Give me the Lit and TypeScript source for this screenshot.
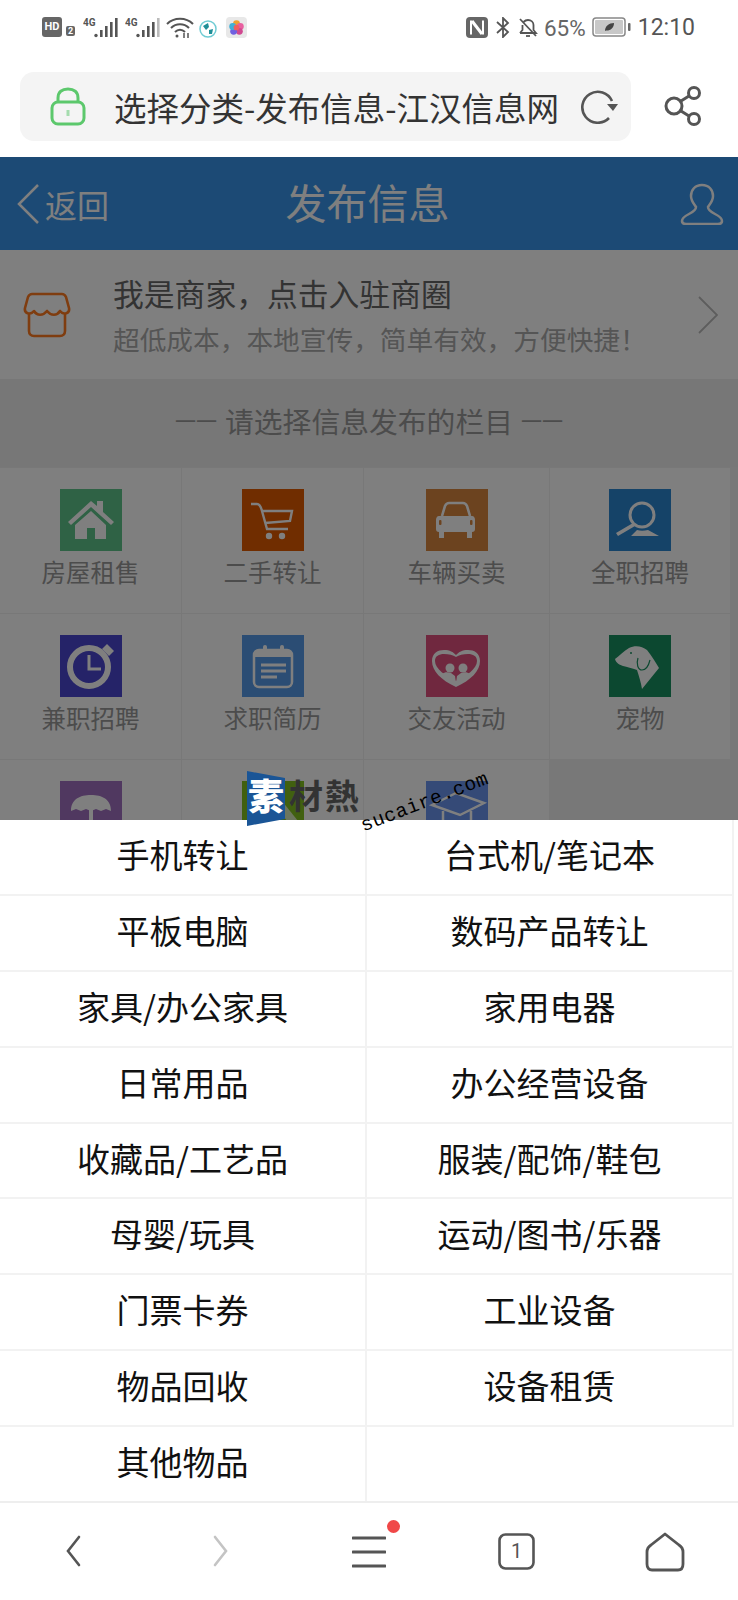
import { LitElement, html, css, svg } from 'lit';
import { customElement } from 'lit/decorators.js';

const tiles = [
  { label: '房屋租售', bg: '#5fc48a', icon: svg`<path d="M8 33 31 12 37 17V12H43V23L54 33 51 36 31 18 11 36Z"/><path d="M15 36 31 22 46 36V50H35V39H27V50H15Z"/>` },
  { label: '二手转让', bg: '#e05a00', icon: svg`<g fill="none" stroke="#fff" stroke-width="2.4"><path d="M9 15H15C18 15 19 18 20 22L25 40H46"/><path d="M20 22H50L48 32 23 34"/></g><circle cx="27" cy="47" r="3.2"/><circle cx="40" cy="47" r="3.2"/>` },
  { label: '车辆买卖', bg: '#d9873f', icon: svg`<path fill="none" stroke="#fff" stroke-width="2.6" d="M16 27 19 17C20 15 21 14 23 14H37C39 14 40 15 41 17L44 27"/><path d="M13 27H46C48 27 49 29 49 31V40C49 42 48 43 46 43V49H41V43H18V49H13V43C11 43 10 42 10 40V31C10 29 11 27 13 27Z"/><rect x="13" y="31" width="2.5" height="5" rx="1" fill="#d9873f"/><rect x="44" y="31" width="2.5" height="5" rx="1" fill="#d9873f"/>` },
  { label: '全职招聘', bg: '#2a86d0', icon: svg`<circle cx="33" cy="26" r="12" fill="none" stroke="#fff" stroke-width="3"/><path d="M24 34 7 44 9 47 26 37Z"/><path d="M28 41C31 42 35 42 39 41L50 47H22Z"/>` },
  { label: '兼职招聘', bg: '#4a47d0', icon: svg`<circle cx="29" cy="32" r="19" fill="none" stroke="#fff" stroke-width="6"/><path d="M42 14 47 9 54 16 49 21Z"/><path d="M29 20V34H41" fill="none" stroke="#fff" stroke-width="3"/>` },
  { label: '求职简历', bg: '#569be8', icon: svg`<rect x="12" y="15" width="38" height="37" rx="5" fill="none" stroke="#fff" stroke-width="2.5"/><path d="M12 20C12 16 14 15 17 15H45C48 15 50 16 50 20V22H12Z"/><rect x="21" y="10" width="4" height="9" rx="2"/><rect x="38" y="10" width="4" height="9" rx="2"/><path d="M19 30H44M19 36H44M19 42H35" stroke="#fff" stroke-width="3"/>` },
  { label: '交友活动', bg: '#e0507f', icon: svg`<path fill-rule="evenodd" d="M30 52C15 45 6 36 6 26 6 18 12 15 18 15 24 15 27 17 30 20 33 17 36 15 42 15 48 15 54 18 54 26 54 36 45 45 30 52ZM30 46C40 41 51 34 51 26 51 21 47 19 42 19 37 19 33 20 30 22 27 20 23 19 18 19 13 19 9 21 9 26 9 34 20 41 30 46Z"/><circle cx="24" cy="33" r="4.5"/><circle cx="37" cy="33" r="4.5"/><path d="M16 39C19 37 21 37 25 38L29 41 30 48ZM44 39C41 37 39 37 35 38L31 41 30 48Z"/>` },
  { label: '宠物', bg: '#189060', icon: svg`<path d="M6 24C10 21 15 16 20 13 26 10 33 11 38 15 43 21 47 28 50 33L33 54C32 48 30 41 28 35 23 33 18 32 14 31 11 30 7 28 6 24Z"/><circle cx="22" cy="18" r="1" fill="#189060"/><path d="M29 23C27 29 29 35 33 35 38 35 40 29 41 25" fill="none" stroke="#189060" stroke-width="1.2"/>` },
  { label: '', bg: '#a070c0', icon: svg`<path d="M11 30C11 18 20 14 31 14 42 14 51 18 51 30L46 28 41 30 36 28 31 30 26 28 21 30 16 28Z"/><rect x="29" y="28" width="4" height="22"/>` },
  { label: '', bg: '#83c020', icon: svg`<path d="M10 4H24V40H10Z" opacity=".6"/><path d="M40 20 56 40 48 44 36 28Z" opacity=".7"/>` },
  { label: '', bg: '#6a94ee', icon: svg`<path d="M6 24 30 12 58 22 34 34Z" fill="none" stroke="#fff" stroke-width="2.5"/><path d="M17 30V42C26 48 38 48 45 40V30" fill="none" stroke="#fff" stroke-width="2.5"/>` },
];

const sheetItems = [
  '手机转让', '台式机/笔记本', '平板电脑', '数码产品转让', '家具/办公家具', '家用电器',
  '日常用品', '办公经营设备', '收藏品/工艺品', '服装/配饰/鞋包', '母婴/玩具', '运动/图书/乐器',
  '门票卡券', '工业设备', '物品回收', '设备租赁', '其他物品',
];

@customElement('app-root')
class AppRoot extends LitElement {
  static styles = css`
    :host {
      display: block;
      width: 738px;
      height: 1600px;
      background: #fff;
      overflow: hidden;
      font-family: "Noto Sans CJK SC", "Noto Sans", sans-serif;
    }
    svg { display: block; flex: none; }

    .status {
      height: 56px;
      display: flex;
      justify-content: space-between;
      padding: 0 43px 0 42px;
      box-sizing: border-box;
      color: #555;
      font-family: Roboto, sans-serif;
    }
    .status-group { display: flex; align-items: flex-start; padding-top: 17px; }
    .hd {
      width: 20px; height: 20px; border-radius: 3px; background: #666; color: #fff;
      font: 700 11px/20px Roboto, sans-serif; text-align: center;
    }
    .sim {
      width: 9px; height: 10px; margin: 9px 0 0 4px; border-radius: 2px; background: #666; color: #fff;
      font: 700 9px/10px Roboto, sans-serif; text-align: center;
    }
    .percent { font-size: 22.5px; line-height: 22px; margin: 0 6px 0 6px; color: #666; }
    .clock { font-size: 23px; line-height: 22px; margin-left: 7px; color: #555; }

    .toolbar { height: 101px; display: flex; align-items: flex-start; padding: 16px 0 0 20px; box-sizing: border-box; }
    .address {
      width: 611px; height: 69px; border-radius: 14px; background: #f4f4f4;
      display: flex; align-items: center; box-sizing: border-box; padding-left: 30px;
    }
    .address-title { font-size: 32.5px; color: #333; margin-left: 28px; width: 450px; white-space: nowrap; }
    .reload { margin-left: 16px; }
    .share { margin: 14px 0 0 33px; }

    .web { position: relative; height: 1344px; background: #fff; overflow: hidden; }
    .header {
      height: 93px; background: #3894ea; color: #fff; display: flex; align-items: center;
      position: relative; box-sizing: border-box; padding: 0 16px;
    }
    .back { display: flex; align-items: center; font-size: 32px; gap: 5px; }
    .page-title { position: absolute; left: 0; right: 3px; text-align: center; font-size: 41px; padding-bottom: 5px; }
    .user { margin-left: auto; margin-right: -2px; }

    .banner { height: 129px; display: flex; align-items: center; padding-left: 23px; box-sizing: border-box; }
    .banner-text { margin-left: 42px; flex: 1; }
    .banner-title { font-size: 30.8px; line-height: 40px; color: #666; }
    .banner-sub { font-size: 26.7px; line-height: 36px; color: #aaa; margin-top: 8px; }
    .chevron { margin-right: 20px; }

    .section {
      height: 88px; background: #eee; display: flex; align-items: center; justify-content: center;
      font-size: 28.8px; color: #999; gap: 8px; padding-bottom: 6px; box-sizing: border-box;
    }
    .dash { font-size: 21px; }
    .grid {
      display: grid; grid-template-columns: 181px 181px 185px 180px; grid-auto-rows: 145px;
      gap: 1px; background: #f0f0f0; padding: 1px 8px 0 0;
    }
    .cell { background: #fff; display: flex; flex-direction: column; align-items: center; padding-top: 21px; box-sizing: border-box; }
    .tile { width: 62px; height: 62px; }
    .tile svg { fill: #fff; }
    .cell-label { font-size: 24.5px; line-height: 34px; color: #999; margin-top: 4px; }
    .cell.empty { background: #f0f0f0; }

    .scrim { position: absolute; inset: 0; background: rgba(0, 0, 0, 0.5); }
    .sheet {
      position: absolute; left: 0; right: 0; bottom: 0; height: 681px; background: #fff;
      display: grid; grid-template-columns: 367px 367px; grid-template-rows: repeat(8, 75.9px) 1fr;
    }
    .item {
      display: flex; align-items: center; justify-content: center; font-size: 33px; color: #111;
      border-right: 2px solid #f2f2f2; border-bottom: 2px solid #f2f2f2; box-sizing: border-box;
      padding-bottom: 6px;
    }
    .item.last { border-bottom: none; }

    .mark { position: absolute; left: 247px; top: 614px; width: 260px; height: 60px; }
    .mark-flag { position: absolute; left: 0; top: 0; }
    .mark-su { position: absolute; left: 0; top: 1px; width: 38px; text-align: center; color: #fff; font-size: 36px; line-height: 44px; font-weight: 900; }
    .mark-rest { position: absolute; left: 42px; top: 2px; color: #333; font-size: 34px; line-height: 44px; font-weight: 700; white-space: nowrap; letter-spacing: 2px; }
    .mark-url {
      position: absolute; left: 119px; top: 43px; font: 19.5px/24px "Liberation Mono", monospace; color: #000;
      transform: rotate(-21deg); transform-origin: left bottom; white-space: nowrap; letter-spacing: 0.6px;
    }

    .nav { height: 99px; border-top: 2px solid #eee; box-sizing: border-box; position: relative; display: flex; }
    .nav-slot { position: relative; }
    .dot { position: absolute; width: 13px; height: 13px; border-radius: 50%; background: #f04848; left: 35px; top: -3px; }
    .tab-count { position: absolute; inset: 0; text-align: center; font: 20px/36px Roboto, sans-serif; color: #555; }
    .nav-back { margin: 32px 0 0 66px; }
    .nav-forward { margin: 32px 0 0 132px; }
    .nav-menu { margin: 20px 0 0 124px; }
    .nav-tab { margin: 30px 0 0 112px; width: 37px; height: 37px; }
    .nav-home { margin: 29px 0 0 110px; }
  `;

  private renderStatus() {
    const signal = (last: string) => svg`<svg width="36" height="22" viewBox="0 0 36 22">
      <text x="0" y="9" font-family="Roboto, sans-serif" font-size="10" font-weight="700" fill="#555">4G</text>
      <circle cx="13" cy="18.5" r="1.7" fill="#555"/>
      <rect x="17" y="13" width="2.6" height="7" fill="#555"/>
      <rect x="22" y="9" width="2.6" height="11" fill="#555"/>
      <rect x="27" y="5" width="2.6" height="15" fill="#555"/>
      <rect x="32" y="1" width="2.6" height="19" fill="${last}"/>
    </svg>`;
    return html`<div class="status">
      <div class="status-group">
        <div class="hd">HD</div>
        <div class="sim">2</div>
        <div style="width:8px"></div>
        ${signal('#555')}
        <div style="width:6px"></div>
        ${signal('#bbb')}
        <div style="width:5px"></div>
        <svg width="28" height="22" viewBox="0 0 28 22" fill="none" stroke="#555" stroke-width="2">
          <path d="M1 7C8 0 20 0 27 7"/><path d="M5 11C10 6 18 6 23 11"/><path d="M9 15C12 12 16 12 19 15"/>
          <circle cx="11" cy="19" r="1.5" fill="#555" stroke="none"/>
          <path d="M18 16V21M22 16V21" stroke-width="1.5"/>
        </svg>
        <div style="width:5px"></div>
        <svg width="18" height="20" viewBox="0 0 18 20" style="margin-top:2px">
          <circle cx="9" cy="10" r="8" fill="#fff" stroke="#70ccd4" stroke-width="1.5"/>
          <path d="M4 7 9 4 10 8 7 11ZM10 11 14 10 13 15 10 15Z" fill="#1f8f98"/>
        </svg>
        <div style="width:9px"></div>
        <svg width="21" height="21" viewBox="0 0 22 22">
          <rect width="22" height="22" rx="4" fill="#e8e8e8"/>
          <circle cx="11" cy="7" r="3.6" fill="#f0a030"/><circle cx="15" cy="10" r="3.6" fill="#e860a0"/>
          <circle cx="14" cy="15" r="3.6" fill="#d04890"/><circle cx="8" cy="15" r="3.6" fill="#7060e0"/>
          <circle cx="7" cy="10" r="3.6" fill="#40b0d8"/><circle cx="11" cy="11" r="3" fill="#f06060"/>
        </svg>
      </div>
      <div class="status-group">
        <svg width="22" height="21" viewBox="0 0 22 21">
          <rect width="22" height="21" rx="4" fill="#666"/>
          <path d="M5 3.5V17.5M17 3.5V17.5" stroke="#fff" stroke-width="2"/>
          <path d="M6 4 16 17" stroke="#fff" stroke-width="3"/>
        </svg>
        <div style="width:8px"></div>
        <svg width="14" height="21" viewBox="0 0 14 21" fill="none" stroke="#555" stroke-width="1.8">
          <path d="M1 5 12 15 7 20V1L12 6 1 16"/>
        </svg>
        <div style="width:8px"></div>
        <svg width="20" height="21" viewBox="0 0 20 21" fill="none" stroke="#555" stroke-width="1.8">
          <path d="M2 16H18L15.5 13V8C15.5 5 13 3 10 3 8 3 6.5 4 5.5 5M4.5 8V13L2 16"/>
          <path d="M2 2 18 19"/><path d="M8 19H12" />
        </svg>
        <div class="percent">65%</div>
        <svg width="39" height="21" viewBox="0 0 39 21">
          <rect x="1" y="1" width="32" height="18" rx="3" fill="#fff" stroke="#888" stroke-width="1.5"/>
          <rect x="3" y="3" width="28" height="14" rx="1" fill="#c8c8c8"/>
          <path d="M13 14C13 9 17 6 22 6 22 11 18 14 14 13.5Z" fill="#444"/>
          <rect x="36" y="6" width="2.5" height="8" rx="1" fill="#666"/>
        </svg>
        <div class="clock">12:10</div>
      </div>
    </div>`;
  }

  private renderToolbar() {
    return html`<div class="toolbar">
      <div class="address">
        <svg width="36" height="40" viewBox="0 0 36 40" fill="none" stroke="#5cc86c" stroke-width="3">
          <path d="M8 15V11C8 5 12 2 18 2 24 2 28 5 28 11V15"/>
          <rect x="2" y="15" width="32" height="22" rx="6"/>
          <path d="M18 23V29" stroke="#a5dcae" stroke-width="3"/>
        </svg>
        <div class="address-title">选择分类-发布信息-江汉信息网</div>
        <svg class="reload" width="38" height="34" viewBox="0 0 38 34" fill="none" stroke="#555" stroke-width="2.6">
          <path d="M29 28A15.5 15.5 0 1 1 32 11"/>
          <path d="M27 14H38L33 21Z" fill="#555" stroke="none"/>
        </svg>
      </div>
      <svg class="share" width="38" height="40" viewBox="0 0 38 40" fill="none" stroke="#555" stroke-width="3">
        <circle cx="10" cy="20" r="8"/><circle cx="30" cy="7" r="5.5"/><circle cx="30" cy="33" r="5.5"/>
        <path d="M17 15 25 10M17 25 25 30"/>
      </svg>
    </div>`;
  }

  private renderWeb() {
    return html`<div class="web">
      <div class="header">
        <div class="back">
          <svg width="24" height="42" viewBox="0 0 24 42" fill="none" stroke="#fff" stroke-width="2.5"><path d="M22 2 3 21 22 40"/></svg>
          <span>返回</span>
        </div>
        <div class="page-title">发布信息</div>
        <svg class="user" width="44" height="42" viewBox="0 0 44 42" fill="none" stroke="#fff" stroke-width="2.5">
          <path d="M22 2C15 2 11 7 11 13 11 18 14 21 16 24 16 27 13 29 9 31 5 33 2 35 2 38 2 40 4 41 6 41H38C40 41 42 40 42 38 42 35 39 33 35 31 31 29 28 27 28 24 30 21 33 18 33 13 33 7 29 2 22 2Z"/>
        </svg>
      </div>
      <div class="banner">
        <svg width="48" height="46" viewBox="0 0 48 46" fill="none" stroke="#ff7a20" stroke-width="2.6" stroke-linejoin="round">
          <path d="M9 2H39C41 2 42 3 43 5L46 16C47 21 41 24 37 19 34 24 28 24 24 19 20 24 14 24 11 19 7 24 1 21 2 16L5 5C6 3 7 2 9 2Z"/>
          <path d="M6 23V39C6 42 8 44 11 44H37C40 44 42 42 42 39V23"/>
        </svg>
        <div class="banner-text">
          <div class="banner-title">我是商家，点击入驻商圈</div>
          <div class="banner-sub">超低成本，本地宣传，简单有效，方便快捷！</div>
        </div>
        <svg class="chevron" width="20" height="38" viewBox="0 0 20 38" fill="none" stroke="#bbb" stroke-width="1.8"><path d="M1 1 19 19 1 37"/></svg>
      </div>
      <div class="section"><span class="dash">一一</span><span>请选择信息发布的栏目</span><span class="dash">一一</span></div>
      <div class="grid">
        ${tiles.map((t) => html`<div class="cell">
          <div class="tile" style="background:${t.bg}">
            <svg width="62" height="62" viewBox="0 0 62 62">${t.icon}</svg>
          </div>
          <div class="cell-label">${t.label}</div>
        </div>`)}
        <div class="cell empty"></div>
      </div>
      <div class="scrim"></div>
      <div class="sheet">
        ${sheetItems.map((s, i) => html`<div class="item ${i === 16 ? 'last' : ''}">${s}</div>`)}
      </div>
      <div class="mark">
        <svg class="mark-flag" width="38" height="56" viewBox="0 0 38 56"><path d="M0 0 38 7V48L0 55Z" fill="#1a5596"/></svg>
        <div class="mark-su">素</div>
        <div class="mark-rest">材熱</div>
        <div class="mark-url">sucaire.com</div>
      </div>
    </div>`;
  }

  private renderNav() {
    return html`<div class="nav">
      <svg class="nav-back" width="15" height="32" viewBox="0 0 15 32" fill="none" stroke="#555" stroke-width="2.6" stroke-linecap="round"><path d="M13 2 2 16 13 30"/></svg>
      <svg class="nav-forward" width="15" height="32" viewBox="0 0 15 32" fill="none" stroke="#c4c4c4" stroke-width="2.6" stroke-linecap="round"><path d="M2 2 13 16 2 30"/></svg>
      <div class="nav-slot nav-menu">
        <svg width="34" height="46" viewBox="0 0 34 46" fill="none" stroke="#555" stroke-width="3" stroke-linecap="round"><path d="M1 15H33M1 29H33M1 43H33"/></svg>
        <div class="dot"></div>
      </div>
      <div class="nav-slot nav-tab">
        <svg width="37" height="37" viewBox="0 0 37 37" fill="none" stroke="#555" stroke-width="2.6"><rect x="1.5" y="1.5" width="34" height="34" rx="6"/></svg>
        <div class="tab-count">1</div>
      </div>
      <svg class="nav-home" width="40" height="40" viewBox="0 0 40 40" fill="none" stroke="#555" stroke-width="2.8" stroke-linejoin="round"><path d="M20 2 34 13C37 15 38 17 38 20V32C38 36 36 38 33 38H7C4 38 2 36 2 32V20C2 17 3 15 6 13Z"/></svg>
    </div>`;
  }

  render() {
    return html`${this.renderStatus()}${this.renderToolbar()}${this.renderWeb()}${this.renderNav()}`;
  }
}
